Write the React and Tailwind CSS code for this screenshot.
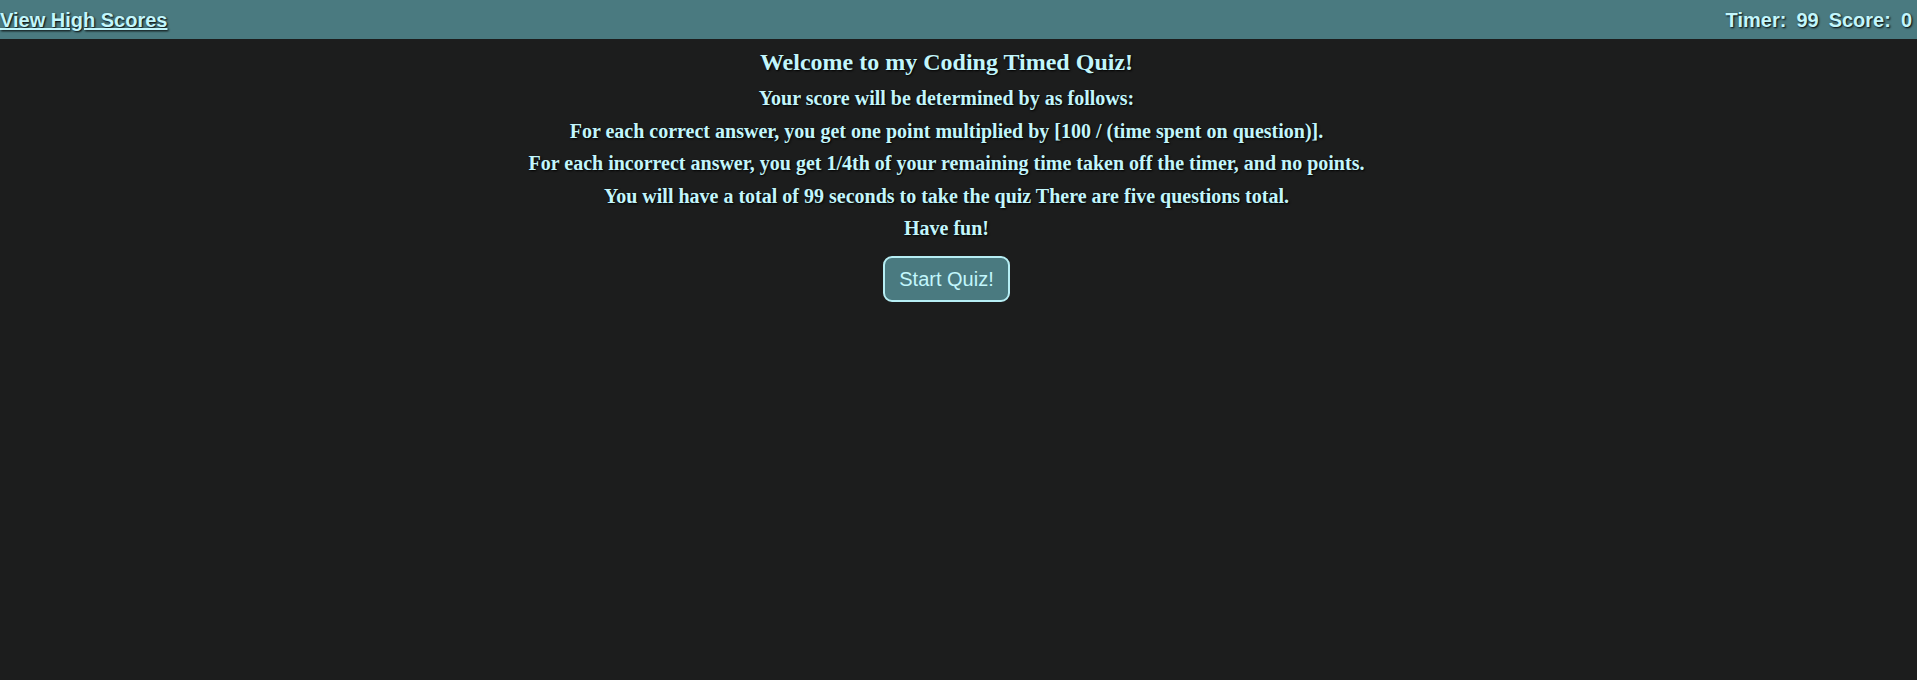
import React from "react";

const glow = "[text-shadow:1px_1px_2px_#000]";

const App = () => {
  return (
    <div className="min-h-[680px] w-full bg-[#1c1d1d]">
      <header className="flex h-[39px] items-center justify-between bg-[#4a7a80] pr-[5px] font-['Liberation_Sans',Arial,sans-serif] text-[20px] font-bold text-[#c2f6fc]">
        <a href="#" className={`underline ${glow}`}>
          View High Scores
        </a>
        <div className={`flex gap-[10px] ${glow}`}>
          <span>Timer:</span>
          <span>99</span>
          <span>Score:</span>
          <span>0</span>
        </div>
      </header>
      <main
        className={`flex flex-col items-center pr-[24px] pt-[9px] text-center font-['Liberation_Serif','Times_New_Roman',serif] font-bold text-[#c2f6fc] ${glow}`}
      >
        <h2 className="text-[24px] leading-[28px]">
          Welcome to my Coding Timed Quiz!
        </h2>
        <div className="mt-[11px] flex flex-col gap-[10.6px] text-[20px] leading-[22px]">
          <p>Your score will be determined by as follows:</p>
          <p>
            For each correct answer, you get one point multiplied by [100 /
            (time spent on question)].
          </p>
          <p>
            For each incorrect answer, you get 1/4th of your remaining time
            taken off the timer, and no points.
          </p>
          <p>
            You will have a total of 99 seconds to take the quiz There are five
            questions total.
          </p>
          <p>Have fun!</p>
        </div>
        <button className="mt-[17px] h-[46px] w-[127px] rounded-[9px] border-2 border-[#b6eef4] bg-[#4a7a80] font-['Liberation_Sans',Arial,sans-serif] text-[20px] font-normal text-[#c2f6fc] [text-shadow:none]">
          Start Quiz!
        </button>
      </main>
    </div>
  );
};

export default App;
